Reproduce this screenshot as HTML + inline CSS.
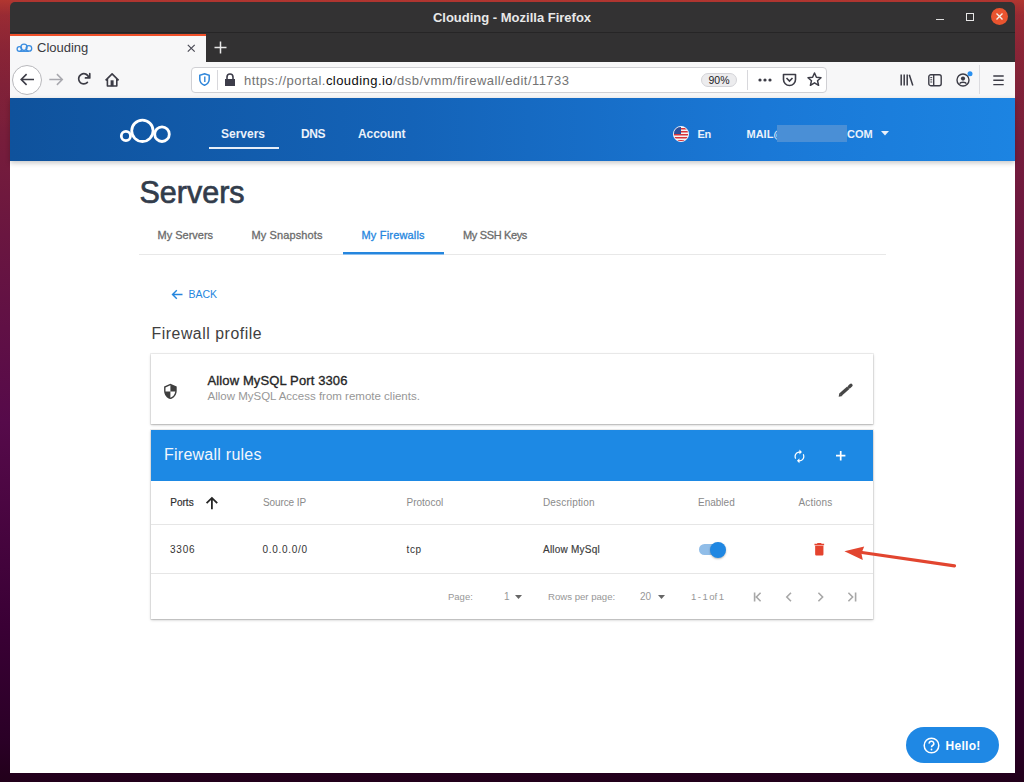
<!DOCTYPE html>
<html><head><meta charset="utf-8">
<style>
*{margin:0;padding:0;box-sizing:border-box}
html,body{width:1024px;height:782px;overflow:hidden}
body{position:relative;font-family:"Liberation Sans",sans-serif;background:linear-gradient(180deg,rgba(232,80,42,.5) 0px,rgba(232,80,42,.28) 15px,rgba(232,80,42,.14) 50px,rgba(232,80,42,.05) 90px,rgba(232,80,42,0) 130px),linear-gradient(180deg,#7a1c36 0%,#7a1f3a 15%,#6a1640 30%,#560a4a 54%,#3a0035 80%,#2a0026 95%,#22001a 100%)}
.a{position:absolute}
.t{position:absolute;white-space:nowrap;line-height:1}
svg{position:absolute;overflow:visible}
#titlebar{left:10px;top:2px;width:1005px;height:30px;background:#333233;border-radius:5px 5px 0 0}
#tabbar{left:10px;top:32px;width:1005px;height:30px;background:#323132;border-top:1px solid #262526}
#tab{left:10px;top:34px;width:196px;height:28px;background:#f7f7f8;border-top:2px solid #f0502a}
#toolbar{left:10px;top:62px;width:1005px;height:36px;background:#f7f7f8}
#page{left:10px;top:98px;width:1005px;height:675px;background:#fff}
#hdr{left:10px;top:98px;width:1005px;height:63px;background:linear-gradient(90deg,#0f529c 0%,#1463b8 40%,#1a78d6 75%,#1c84e2 100%);box-shadow:0 2px 5px rgba(0,0,0,.22)}
.nav{color:#eaf1fa;font-size:12px;font-weight:bold}
</style></head><body>
<!-- window chrome -->
<div id="titlebar" class="a"></div>
<div class="t" style="left:0;width:1024px;text-align:center;top:11px;font-size:13px;font-weight:bold;color:#e8e8e8">Clouding - Mozilla Firefox</div>
<!-- minimize / maximize / close -->
<div class="a" style="left:936px;top:19px;width:8px;height:1px;background:#ddd"></div>
<div class="a" style="left:966px;top:13px;width:7.5px;height:7.5px;border:1px solid #e6e6e6"></div>
<div class="a" style="left:991px;top:8px;width:17px;height:17px;border-radius:50%;background:#e9542f"></div>
<svg style="left:995px;top:12px" width="9" height="9"><path d="M1.5 1.5L7.5 7.5M7.5 1.5L1.5 7.5" stroke="#f4f0e8" stroke-width="1.4"/></svg>

<div id="tabbar" class="a"></div>
<div id="tab" class="a"></div>
<svg style="left:0;top:0" width="40" height="60"><g fill="none" stroke="#3a8de0" stroke-width="1.3"><circle cx="19.4" cy="49" r="2.3"/><circle cx="24" cy="47.3" r="3.1"/><circle cx="28.9" cy="48.4" r="2.8"/><path d="M19.4 51.3H28.9"/></g></svg>
<div class="t" style="left:37px;top:41px;font-size:13px;color:#3a3a3f">Clouding</div>
<svg style="left:187px;top:44px" width="9" height="9"><path d="M0.8 0.8L7.7 7.7M7.7 0.8L0.8 7.7" stroke="#4a4a55" stroke-width="1.2"/></svg>
<svg style="left:214px;top:41px" width="13" height="13"><path d="M6.5 0.5V12.5M0.5 6.5H12.5" stroke="#e8e8e8" stroke-width="1.5"/></svg>

<div id="toolbar" class="a"></div>
<!-- back/forward/reload/home -->
<div class="a" style="left:12px;top:64.5px;width:30px;height:30px;border-radius:50%;background:#fff;border:1px solid #b8b8bc"></div>
<svg style="left:20px;top:73.2px" width="15" height="13"><path d="M14 6.5H1.2M6.6 1.1L1.2 6.5L6.6 11.9" fill="none" stroke="#3c3c46" stroke-width="1.6"/></svg>
<svg style="left:49px;top:73.2px" width="15" height="13"><path d="M0.3 6.5H13.3M7.9 1.1L13.3 6.5L7.9 11.9" fill="none" stroke="#a8a8ae" stroke-width="1.5"/></svg>
<svg style="left:77px;top:72.2px" width="13.6" height="13.6" viewBox="0 0 16 16"><path fill="#3c3c46" d="M15 1a1 1 0 0 0-1 1v2.418A6.995 6.995 0 1 0 8 15a6.954 6.954 0 0 0 4.950-2.050 1 1 0 0 0-1.414-1.414A5.019 5.019 0 1 1 12.549 6H10a1 1 0 0 0 0 2h5a1 1 0 0 0 1-1V2a1 1 0 0 0-1-1z"/></svg>
<svg style="left:0;top:0" width="130" height="100"><path d="M105.6 80.4L112.1 73.9L118.6 80.4M107.4 78.6V86H116.8V78.6" fill="none" stroke="#3c3c46" stroke-width="1.6" stroke-linejoin="round"/><rect x="110.6" y="80.3" width="3" height="5.9" fill="#3c3c46"/></svg>
<!-- url bar -->
<div class="a" style="left:191px;top:67px;width:636px;height:26px;background:#fff;border:1px solid #d0d0d4;border-radius:4px"></div>
<svg style="left:199px;top:73px" width="11" height="13" viewBox="0 0 11 13"><path d="M5.5 0.8L10.2 2.3V6.2C10.2 9.2 8 11.3 5.5 12.3C3 11.3 0.8 9.2 0.8 6.2V2.3Z" fill="none" stroke="#2f86da" stroke-width="1.5"/><path d="M5.8 3.6V9" stroke="#2f86da" stroke-width="1.4"/></svg>
<div class="a" style="left:217px;top:70px;width:1px;height:20px;background:#d8d8dc"></div>
<svg style="left:224px;top:73px" width="12" height="13" viewBox="0 0 12 13"><path d="M3 6V4A3 3 0 0 1 9 4V6" fill="none" stroke="#3d3d4a" stroke-width="1.6"/><rect x="1" y="6" width="10" height="7" fill="#3d3d4a"/></svg>
<div class="t" style="left:244px;top:74px;font-size:13px;color:#737373;letter-spacing:0.45px">https://portal.<span style="color:#0c0c0d">clouding.io</span>/dsb/vmm/firewall/edit/11733</div>
<div class="a" style="left:700.5px;top:73px;width:36px;height:14px;background:#ececee;border:1px solid #d4d4d8;border-radius:7px"></div>
<div class="t" style="left:701px;top:75px;width:36px;text-align:center;font-size:10.5px;color:#1c1c1e">90%</div>
<div class="a" style="left:747px;top:70px;width:1px;height:20px;background:#d8d8dc"></div>
<svg style="left:758px;top:78px" width="14" height="4"><circle cx="2" cy="2" r="1.6" fill="#3c3c46"/><circle cx="7" cy="2" r="1.6" fill="#3c3c46"/><circle cx="12" cy="2" r="1.6" fill="#3c3c46"/></svg>
<svg style="left:782px;top:73px" width="15" height="14" viewBox="0 0 15 14"><path d="M1.5 1.5H13.5V6.5A6 6 0 0 1 1.5 6.5Z" fill="none" stroke="#3c3c46" stroke-width="1.6" stroke-linejoin="round"/><path d="M4.5 5L7.5 8L10.5 5" fill="none" stroke="#3c3c46" stroke-width="1.6"/></svg>
<svg style="left:807px;top:72px" width="15" height="15" viewBox="0 0 15 15"><path d="M7.5 1L9.4 5.3L14 5.7L10.5 8.7L11.6 13.3L7.5 10.8L3.4 13.3L4.5 8.7L1 5.7L5.6 5.3Z" fill="none" stroke="#3c3c46" stroke-width="1.5" stroke-linejoin="round"/></svg>
<!-- right toolbar icons -->
<svg style="left:900px;top:73.5px" width="14" height="13" viewBox="0 0 14 13"><path d="M1.2 0.5V11.5M4.2 0.5V11.5M7.2 0.5V11.5M9.3 0.8L12.8 11.5" stroke="#3c3c46" stroke-width="1.5"/></svg>
<svg style="left:928px;top:73.5px" width="14" height="13" viewBox="0 0 14 13"><rect x="0.8" y="0.8" width="12.4" height="10.9" rx="2" fill="none" stroke="#3c3c46" stroke-width="1.4"/><path d="M5.7 1V11.5" stroke="#3c3c46" stroke-width="1.4"/><path d="M2.3 3.6H4.2M2.3 5.8H4.2M2.3 8H4.2" stroke="#3c3c46" stroke-width="1"/></svg>
<svg style="left:955.5px;top:71px" width="17" height="16" viewBox="0 0 17 16"><circle cx="7" cy="9" r="6" fill="none" stroke="#3c3c46" stroke-width="1.4"/><circle cx="7" cy="7.6" r="2.1" fill="#3c3c46"/><path d="M3.6 12.6C4.4 10.8 9.6 10.8 10.4 12.6" fill="none" stroke="#3c3c46" stroke-width="1.4"/><circle cx="14" cy="2.8" r="2.5" fill="#2a90f0"/></svg>
<div class="a" style="left:979px;top:65px;width:1px;height:29px;background:#dcdce0"></div>
<svg style="left:993px;top:74.5px" width="11" height="11"><path d="M0.3 1H10.7M0.3 5.3H10.7M0.3 9.6H10.7" stroke="#3c3c46" stroke-width="1.4"/></svg>

<!-- page -->
<div id="page" class="a"></div>
<div id="hdr" class="a"></div>

<!-- header -->
<svg style="left:118px;top:117px" width="54" height="28" viewBox="0 0 54 28"><g fill="none" stroke="#fff" stroke-width="2.8"><circle cx="7.9" cy="19" r="4.6"/><circle cx="24.4" cy="13.8" r="10.7"/><circle cx="44" cy="17.2" r="7.3"/></g></svg>
<div class="t nav" style="left:221px;top:127.5px">Servers</div>
<div class="a" style="left:209px;top:147px;width:70px;height:2px;background:#e6eef8"></div>
<div class="t nav" style="left:301px;top:127.5px;letter-spacing:-0.4px">DNS</div>
<div class="t nav" style="left:358px;top:127.5px;letter-spacing:-0.1px">Account</div>
<!-- flag -->
<svg style="left:673px;top:126px" width="16" height="16" viewBox="0 0 16 16"><defs><clipPath id="fc"><circle cx="8" cy="8" r="7.6"/></clipPath></defs><g clip-path="url(#fc)"><rect width="16" height="16" fill="#f4f4f4"/><rect y="2" width="16" height="1.5" fill="#d8343a"/><rect y="5" width="16" height="1.5" fill="#d8343a"/><rect y="8" width="16" height="1.5" fill="#d8343a"/><rect y="11" width="16" height="1.5" fill="#d8343a"/><rect y="14" width="16" height="1.5" fill="#d8343a"/><rect width="8" height="8" fill="#2d4f9a"/></g><circle cx="8" cy="8" r="7.6" fill="none" stroke="#fff" stroke-width="0.8"/></svg>
<div class="t nav" style="left:697.5px;top:129px;font-size:11px;letter-spacing:-0.3px">En</div>
<div class="t nav" style="left:746.5px;top:129px;font-size:11px">MAIL@</div>
<div class="a" style="left:777px;top:125px;width:70px;height:17px;background:#4a8fd6"></div>
<div class="t nav" style="left:847px;top:129px;font-size:11px">COM</div>
<svg style="left:881px;top:131px" width="8" height="5"><path d="M0 0H8L4 4.5Z" fill="#eaf1fa"/></svg>

<!-- Servers title -->
<div class="t" style="left:139.5px;top:177px;font-size:30.5px;color:#323c4b;-webkit-text-stroke:0.7px #323c4b">Servers</div>
<!-- tabs -->
<div class="t" style="left:157.5px;top:229.5px;font-size:11px;color:#6b6b6b;-webkit-text-stroke:0.3px #6b6b6b">My Servers</div>
<div class="t" style="left:251.5px;top:229.5px;font-size:11px;color:#6b6b6b;-webkit-text-stroke:0.3px #6b6b6b;letter-spacing:0.12px">My Snapshots</div>
<div class="t" style="left:361.5px;top:229.5px;font-size:11px;color:#2586de;-webkit-text-stroke:0.3px #2586de;letter-spacing:0.18px">My Firewalls</div>
<div class="t" style="left:463px;top:229.5px;font-size:11px;color:#6b6b6b;-webkit-text-stroke:0.3px #6b6b6b;letter-spacing:-0.35px">My SSH Keys</div>
<div class="a" style="left:139px;top:254px;width:747px;height:1px;background:#e8e8e8"></div>
<div class="a" style="left:343px;top:252px;width:101px;height:2px;background:#2586de;box-shadow:0 1px 0 #8fc0ee"></div>

<!-- back -->
<svg style="left:171px;top:289px" width="12" height="11" viewBox="0 0 12 11"><path d="M11.5 5.5H1.5M5.8 1.2L1.5 5.5L5.8 9.8" fill="none" stroke="#2586de" stroke-width="1.4"/></svg>
<div class="t" style="left:188.5px;top:288.5px;font-size:10.5px;color:#2586de">BACK</div>
<div class="t" style="left:151.5px;top:325.5px;font-size:15.8px;color:#404040;letter-spacing:0.55px">Firewall profile</div>

<!-- profile card -->
<div class="a" style="left:151px;top:354px;width:722px;height:70px;background:#fff;box-shadow:0 0 0 1px rgba(0,0,0,.06),0 1px 3px rgba(0,0,0,.2),0 1px 1px rgba(0,0,0,.08)"></div>
<svg style="left:161.6px;top:382.6px" width="16.8" height="16.8" viewBox="0 0 24 24"><path fill="#3e3e3e" fill-rule="evenodd" d="M12 1L3 5v6c0 5.55 3.84 10.74 9 12 5.16-1.26 9-6.45 9-12V5l-9-4zm0 10.99h7c-.53 4.12-3.28 7.79-7 8.94V12H5V6.3l7-3.11v8.8z"/></svg>
<div class="t" style="left:207.5px;top:374px;font-size:13px;color:#262626;-webkit-text-stroke:0.35px #262626;letter-spacing:0.12px">Allow MySQL Port 3306</div>
<div class="t" style="left:207.5px;top:391px;font-size:11.5px;color:#979797">Allow MySQL Access from remote clients.</div>
<svg style="left:0;top:0" width="1024" height="782"><path d="M840.6 394.6L848.3 387.7" stroke="#464646" stroke-width="3.3"/><path d="M849.4 386.7L851 385.3" stroke="#464646" stroke-width="3.3" stroke-linecap="round"/><path d="M838.7 396.7L839.4 392.9L842.5 395.9Z" fill="#464646"/></svg>

<!-- rules card -->
<div class="a" style="left:151px;top:430px;width:722px;height:189px;background:#fff;box-shadow:0 0 0 1px rgba(0,0,0,.06),0 1px 3px rgba(0,0,0,.2),0 1px 1px rgba(0,0,0,.08)"></div>
<div class="a" style="left:151px;top:430px;width:722px;height:51px;background:#1d89e4"></div>
<div class="t" style="left:164px;top:447px;font-size:16px;color:#f2f7fd;letter-spacing:0.25px">Firewall rules</div>
<svg style="left:792.1px;top:448.6px" width="14.9" height="14.9" viewBox="0 0 24 24"><path fill="#fff" d="M12 6v3l4-4-4-4v3c-4.42 0-8 3.58-8 8 0 1.570.46 3.03 1.24 4.26L6.7 14.8c-.45-.83-.7-1.79-.7-2.8 0-3.310 2.69-6 6-6zm6.76 1.74L17.3 9.2c.44.84.7 1.79.7 2.8 0 3.31-2.69 6-6 6v-3l-4 4 4 4v-3c4.42 0 8-3.58 8-8 0-1.57-.46-3.03-1.24-4.26z"/></svg>
<svg style="left:836px;top:451.4px" width="9.4" height="9.4"><path d="M4.7 0V9.4M0 4.7H9.4" stroke="#fff" stroke-width="1.7"/></svg>

<div class="t" style="left:170.3px;top:498px;font-size:10px;color:#2e2e2e;-webkit-text-stroke:0.2px #2e2e2e">Ports</div>
<svg style="left:205px;top:496px" width="14" height="14" viewBox="0 0 14 14"><path d="M6.9 13.2V2M1.6 7.2L6.9 1.9L12.2 7.2" fill="none" stroke="#262626" stroke-width="1.8"/></svg>
<div class="t" style="left:263px;top:497.5px;font-size:10px;color:#8a8a8a;letter-spacing:-0.1px">Source IP</div>
<div class="t" style="left:406.5px;top:497.5px;font-size:10px;color:#8a8a8a">Protocol</div>
<div class="t" style="left:543px;top:497.5px;font-size:10px;color:#8a8a8a;letter-spacing:0.15px">Description</div>
<div class="t" style="left:698px;top:497.5px;font-size:10px;color:#8a8a8a">Enabled</div>
<div class="t" style="left:798.5px;top:497.5px;font-size:10px;color:#8a8a8a;letter-spacing:0.15px">Actions</div>
<div class="a" style="left:151px;top:524px;width:722px;height:1px;background:#e6e6e6"></div>

<div class="t" style="left:170px;top:545px;font-size:10px;color:#333;letter-spacing:0.8px">3306</div>
<div class="t" style="left:262.5px;top:545px;font-size:10px;color:#333;letter-spacing:0.7px">0.0.0.0/0</div>
<div class="t" style="left:406.5px;top:545px;font-size:10px;color:#333;letter-spacing:0.6px">tcp</div>
<div class="t" style="left:543px;top:545px;font-size:10px;color:#3a3a3a;-webkit-text-stroke:0.15px #3a3a3a;letter-spacing:0.22px">Allow MySql</div>
<!-- toggle -->
<div class="a" style="left:698.5px;top:543.5px;width:24px;height:11.5px;border-radius:6px;background:#90bde8"></div>
<div class="a" style="left:710.2px;top:541.9px;width:15.8px;height:15.8px;border-radius:50%;background:#1f87e2;box-shadow:0 1px 2px rgba(0,0,0,.28)"></div>
<!-- trash -->
<svg style="left:810.9px;top:541.1px" width="16.6" height="16.6" viewBox="0 0 24 24"><path fill="#e4432e" d="M6 19c0 1.1.9 2 2 2h8c1.1 0 2-.9 2-2V7H6v12zM19 4h-3.5l-1-1h-5l-1 1H5v2h14V4z"/></svg>
<div class="a" style="left:151px;top:573px;width:722px;height:1px;background:#e6e6e6"></div>
<!-- arrow -->
<svg style="left:0;top:0" width="1024" height="782"><path d="M954.5 565.8L862 552.5" stroke="#e2452f" stroke-width="3.2" stroke-linecap="round"/><path d="M844.4 551.2L864.2 546.5L861.4 553.2L862.8 560Z" fill="#e2452f"/></svg>

<!-- footer -->
<div class="t" style="left:448px;top:592px;font-size:9.5px;color:#979797">Page:</div>
<div class="t" style="left:504px;top:592px;font-size:10px;color:#979797">1</div>
<svg style="left:515px;top:595px" width="8" height="5"><path d="M0 0H7L3.5 4Z" fill="#666"/></svg>
<div class="t" style="left:548px;top:592px;font-size:9.6px;color:#979797">Rows per page:</div>
<div class="t" style="left:640px;top:592px;font-size:10px;color:#979797">20</div>
<svg style="left:658px;top:595px" width="8" height="5"><path d="M0 0H7L3.5 4Z" fill="#666"/></svg>
<div class="t" style="left:691px;top:592px;font-size:9.6px;color:#979797;word-spacing:-1.2px">1 - 1 of 1</div>
<svg style="left:0;top:0" width="1024" height="782"><g fill="none" stroke="#a8a8a8" stroke-width="1.6"><path d="M754.6 592.4V601.4M760.6 592.8L756.4 597L760.6 601.2M791 592.8L786.8 597L791 601.2M818.4 592.8L822.6 597L818.4 601.2M848.4 592.8L852.6 597L848.4 601.2M855.6 592.4V601.4"/></g></svg>

<!-- hello -->
<div class="a" style="left:906px;top:727px;width:93px;height:36px;border-radius:18px;background:#1f88e4"></div>
<svg style="left:922.5px;top:736.7px" width="17" height="17" viewBox="0 0 17 17"><circle cx="8.5" cy="8.5" r="7.3" fill="none" stroke="#fff" stroke-width="1.5"/><path d="M6.2 6.6A2.3 2.3 0 1 1 9.6 8.5C8.8 9 8.5 9.4 8.5 10.3" fill="none" stroke="#fff" stroke-width="1.5"/><circle cx="8.5" cy="12.5" r="0.9" fill="#fff"/></svg>
<div class="t" style="left:945.5px;top:739.5px;font-size:12px;font-weight:bold;color:#fff;letter-spacing:0.3px">Hello!</div>
</body></html>
